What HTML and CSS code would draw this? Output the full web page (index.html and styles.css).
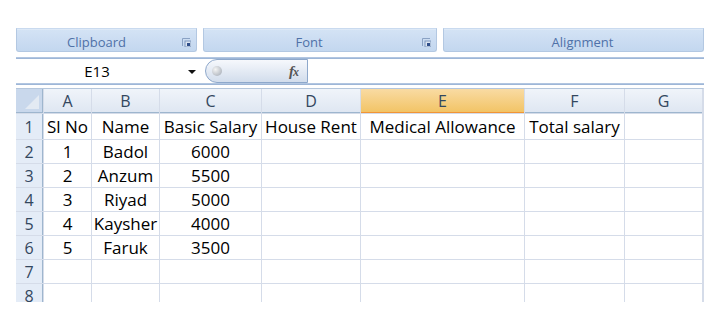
FILE: index.html
```html
<!DOCTYPE html>
<html lang="en">
<head>
    <meta charset="UTF-8">
    <title>Salary Sheet</title>
    <link rel="stylesheet" href="styles.css">
</head>
<body>
    <div class="app">
        <!-- Ribbon group captions -->
        <div class="ribbon">
            <div class="group group-clipboard">
                <span class="group-label">Clipboard</span>
                <svg class="launcher" width="9" height="9" viewBox="0 0 9 9">
                    <path d="M0.5 8V0.5H8" fill="none" stroke="#8aa2c4"/>
                    <rect x="3" y="3" width="6" height="6" fill="#dbe5f2" stroke="#7f98bd" stroke-width="1"/>
                    <rect x="5" y="5" width="3" height="3" fill="#2f4f8a"/>
                </svg>
            </div>
            <div class="group group-font">
                <span class="group-label">Font</span>
                <svg class="launcher" width="9" height="9" viewBox="0 0 9 9">
                    <path d="M0.5 8V0.5H8" fill="none" stroke="#8aa2c4"/>
                    <rect x="3" y="3" width="6" height="6" fill="#dbe5f2" stroke="#7f98bd" stroke-width="1"/>
                    <rect x="5" y="5" width="3" height="3" fill="#2f4f8a"/>
                </svg>
            </div>
            <div class="group group-align">
                <span class="group-label">Alignment</span>
            </div>
        </div>

        <!-- Formula bar -->
        <div class="bar-line"></div>
        <div class="formula-bar">
            <div class="name-box">E13</div>
            <span class="drop-arrow"></span>
            <div class="fx-pill">
                <span class="fx-ball"></span>
                <span class="fx">f<span class="fx-x">x</span></span>
            </div>
            <div class="formula-input"></div>
        </div>
        <div class="bar-line"></div>

        <!-- Worksheet -->
        <div class="sheet">
            <div class="corner"></div>
            <div class="col-head">A</div>
            <div class="col-head">B</div>
            <div class="col-head">C</div>
            <div class="col-head">D</div>
            <div class="col-head active">E</div>
            <div class="col-head">F</div>
            <div class="col-head">G</div>

            <div class="row-head">1</div>
            <div class="cell">Sl No</div>
            <div class="cell">Name</div>
            <div class="cell">Basic Salary</div>
            <div class="cell">House Rent</div>
            <div class="cell">Medical Allowance</div>
            <div class="cell">Total salary</div>
            <div class="cell"></div>

            <div class="row-head">2</div>
            <div class="cell">1</div>
            <div class="cell">Badol</div>
            <div class="cell">6000</div>
            <div class="cell"></div>
            <div class="cell"></div>
            <div class="cell"></div>
            <div class="cell"></div>

            <div class="row-head">3</div>
            <div class="cell">2</div>
            <div class="cell">Anzum</div>
            <div class="cell">5500</div>
            <div class="cell"></div>
            <div class="cell"></div>
            <div class="cell"></div>
            <div class="cell"></div>

            <div class="row-head">4</div>
            <div class="cell">3</div>
            <div class="cell">Riyad</div>
            <div class="cell">5000</div>
            <div class="cell"></div>
            <div class="cell"></div>
            <div class="cell"></div>
            <div class="cell"></div>

            <div class="row-head">5</div>
            <div class="cell">4</div>
            <div class="cell">Kaysher</div>
            <div class="cell">4000</div>
            <div class="cell"></div>
            <div class="cell"></div>
            <div class="cell"></div>
            <div class="cell"></div>

            <div class="row-head">6</div>
            <div class="cell">5</div>
            <div class="cell">Faruk</div>
            <div class="cell">3500</div>
            <div class="cell"></div>
            <div class="cell"></div>
            <div class="cell"></div>
            <div class="cell"></div>

            <div class="row-head">7</div>
            <div class="cell"></div>
            <div class="cell"></div>
            <div class="cell"></div>
            <div class="cell"></div>
            <div class="cell"></div>
            <div class="cell"></div>
            <div class="cell"></div>

            <div class="row-head">8</div>
            <div class="cell"></div>
            <div class="cell"></div>
            <div class="cell"></div>
            <div class="cell"></div>
            <div class="cell"></div>
            <div class="cell"></div>
            <div class="cell"></div>
        </div>
    </div>
</body>
</html>
```

FILE: styles.css
```css
/* General */
body {
    margin: 0;
    padding: 0;
    background: #ffffff;
    font-family: 'Open Sans', sans-serif;
    color: #000;
}

.app {
    width: 688px;
    margin-left: 16px;
    padding-top: 28px;
}

/* Ribbon captions */
.ribbon {
    display: flex;
    gap: 6px;
    height: 24px;
}

.group {
    position: relative;
    display: flex;
    align-items: center;
    justify-content: center;
    box-sizing: border-box;
    height: 24px;
    background: linear-gradient(#d4e3f5, #c3d7ef);
    border: 1px solid #b3c8e2;
    border-top-color: #c9daef;
    border-radius: 0 0 3px 3px;
    box-shadow: inset 0 1px 0 #dde9f7;
}

.group-clipboard {
    width: 181px;
    padding-right: 20px;
}

.group-font {
    width: 234px;
    padding-right: 22px;
}

.group-align {
    flex: 1;
    padding-left: 18px;
}

.group-label {
    font-size: 13px;
    color: #4f71a8;
    line-height: 1;
    padding-top: 4px;
}

.launcher {
    position: absolute;
    right: 5px;
    top: 9px;
}

/* Formula bar */
.bar-line {
    height: 2px;
    background: linear-gradient(#bccee6, #93aed2);
}

.ribbon + .bar-line {
    margin-top: 5px;
}

.formula-bar {
    display: flex;
    align-items: center;
    height: 24px;
}

.name-box {
    width: 162px;
    text-align: center;
    font-size: 15px;
    line-height: 24px;
}

.drop-arrow {
    width: 0;
    height: 0;
    margin-left: 10px;
    margin-top: 1px;
    border-left: 4px solid transparent;
    border-right: 4px solid transparent;
    border-top: 4px solid #111;
}

.fx-pill {
    display: flex;
    align-items: center;
    justify-content: space-between;
    box-sizing: border-box;
    width: 103px;
    height: 24px;
    margin-left: 9px;
    padding: 0 9px 0 6px;
    background: linear-gradient(#f6f8fc, #d2ddec);
    border: 1px solid #8ea8cb;
    border-radius: 12px 0 0 12px;
}

.fx-ball {
    width: 10px;
    height: 10px;
    border-radius: 50%;
    background: radial-gradient(circle at 35% 35%, #f4f4f4, #9ea6b1);
}

.fx {
    font-family: 'Liberation Serif', serif;
    font-style: italic;
    font-weight: bold;
    font-size: 15px;
    color: #555;
    letter-spacing: -1px;
}

.fx-x {
    font-size: 12px;
}

.formula-input {
    flex: 1;
}

/* Worksheet grid */
.sheet {
    display: grid;
    grid-template-columns: 27px 47px 67px 101px 98px 163px 99px 77px;
    grid-template-rows: 24px 25px repeat(7, 23px);
    gap: 1px;
    margin-top: 3px;
    height: 213px;
    overflow: hidden;
    background: #d5dce9;
    border-top: 1px solid #b4c6dc;
    border-right: 1px solid #d5dce9;
    font-size: 17px;
}

.corner {
    position: relative;
    box-sizing: border-box;
    background: #c9d8ec;
    border-bottom: 1px solid #9eb6ce;
    border-right: 1px solid #9eb6ce;
}

.corner::after {
    content: "";
    position: absolute;
    right: 3px;
    bottom: 3px;
    border-left: 14px solid transparent;
    border-bottom: 14px solid #e3eaf3;
}

.col-head {
    display: flex;
    align-items: center;
    justify-content: center;
    box-sizing: border-box;
    background: linear-gradient(#f0f4fa, #dfe7f2);
    border-bottom: 1px solid #9eb6ce;
    color: #33475e;
    font-size: 16px;
}

.col-head.active {
    background: linear-gradient(#f9dba3, #f2c466);
    border-bottom: 1px solid #f29536;
}

.row-head {
    display: flex;
    align-items: center;
    justify-content: center;
    box-sizing: border-box;
    background: #e4ecf7;
    border-right: 1px solid #9eb6ce;
    color: #33475e;
    font-size: 16px;
}

.cell {
    display: flex;
    align-items: center;
    justify-content: center;
    background: #ffffff;
    white-space: nowrap;
    overflow: hidden;
}
```
